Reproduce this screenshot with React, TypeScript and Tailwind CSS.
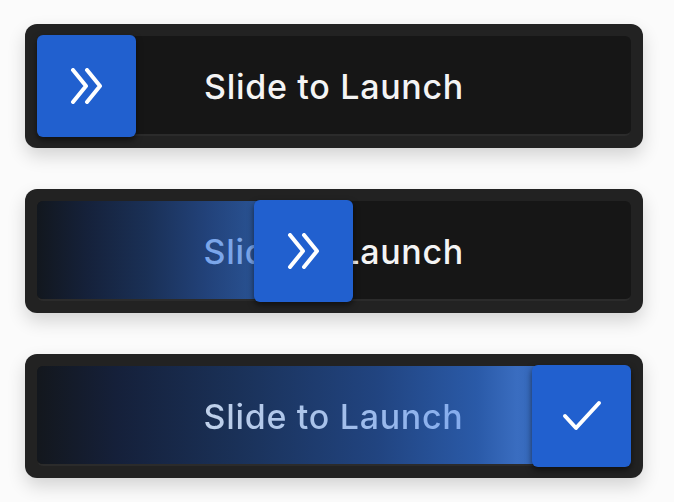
import type { ReactNode } from 'react'

const LABEL = 'Slide to Launch'

function Chevrons() {
  return (
    <svg width="36" height="36" viewBox="0 0 36 36" fill="none" stroke="white" strokeWidth="4" strokeLinecap="round" strokeLinejoin="round">
      <path d="M4 2 L17 18 L4 34" />
      <path d="M18 2 L31 18 L18 34" />
    </svg>
  )
}

function Check() {
  return (
    <svg width="40" height="32" viewBox="0 0 40 32" fill="none" stroke="white" strokeWidth="4" strokeLinecap="round" strokeLinejoin="round">
      <path d="M3 16 L14 28 L37 3" />
    </svg>
  )
}

function Knob({ children, left }: { children: ReactNode; left: number }) {
  return (
    <div
      className="absolute -top-px flex h-[102px] w-[99px] items-center justify-center rounded-[6px] bg-[#2160cf] shadow-[0_3px_6px_rgba(0,0,0,0.55)]"
      style={{ left }}
    >
      {children}
    </div>
  )
}

function Slider({ progress, fill, textClass, knob }: { progress: number; fill: string; textClass: string; knob: ReactNode }) {
  return (
    <div className="rounded-[12px] bg-[#222222] p-3 shadow-[0_8px_18px_rgba(0,0,0,0.16)]">
      <div className="relative h-[100px] rounded-[6px] border-b-2 border-[#2b2b2b] bg-[#161616]">
        <div className="flex h-full items-center justify-center pt-[3px] text-[34px] font-medium tracking-[0.7px] text-[#f4f4f4]">
          {LABEL}
        </div>
        {progress > 0 && (
          <div className="absolute inset-y-0 left-0 overflow-hidden rounded-l-[6px]" style={{ width: progress }}>
            <div className={`flex h-full w-[593px] items-center justify-center pt-[3px] ${fill}`}>
              <span className={`text-[34px] font-medium tracking-[0.7px] ${textClass}`}>{LABEL}</span>
            </div>
          </div>
        )}
        {knob}
      </div>
    </div>
  )
}

export default function App() {
  return (
    <div className="flex min-h-[502px] w-[674px] flex-col gap-[41px] bg-[#fbfbfb] pl-[25px] pt-[24px]" style={{ fontFamily: 'Inter, "Noto Sans", sans-serif' }}>
      <div className="w-[618px]">
        <Slider progress={0} fill="" textClass="" knob={<Knob left={0}><Chevrons /></Knob>} />
      </div>
      <div className="w-[618px]">
        <Slider
          progress={230}
          fill="bg-[linear-gradient(90deg,#12171e_0px,#15213a_50px,#1a3056_110px,#22427a_170px,#2b5698_230px)]"
          textClass="text-[#7ba6ea]"
          knob={<Knob left={217}><Chevrons /></Knob>}
        />
      </div>
      <div className="w-[618px]">
        <Slider
          progress={520}
          fill="bg-[linear-gradient(90deg,#13171d_0px,#15203a_80px,#1a3158_200px,#214480_340px,#2a5aa8_440px,#3a6dc0_480px,#2e62b4_520px)]"
          textClass="bg-[linear-gradient(90deg,#c0d1ea_0%,#a8c2ea_45%,#84acee_100%)] bg-clip-text text-transparent"
          knob={<Knob left={495}><Check /></Knob>}
        />
      </div>
    </div>
  )
}
